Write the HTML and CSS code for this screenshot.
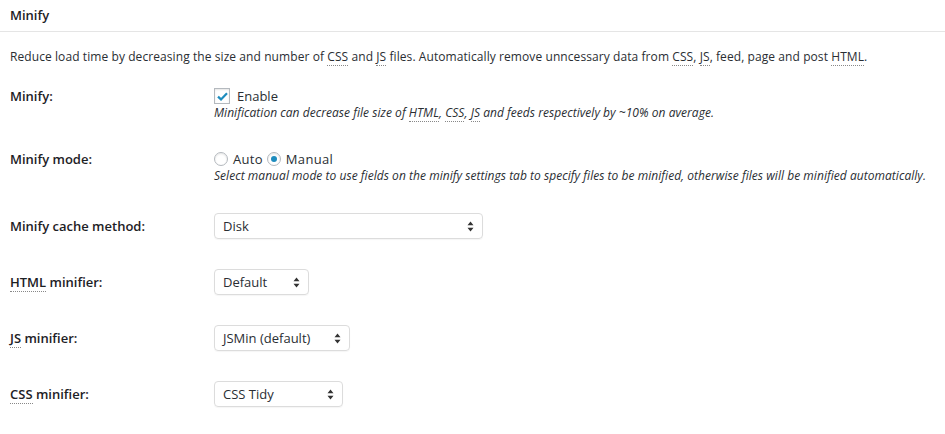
FILE: index.html
```html
<!DOCTYPE html>
<html>
<head>
<meta charset="utf-8">
<link rel="stylesheet" href="styles.css">
</head>
<body>
<div class="hd"><h3 class="hd-title">Minify</h3></div>
<div class="panel">
  <p class="intro">Reduce load time by decreasing the size and number of <abbr>CSS</abbr> and <abbr>JS</abbr> files. Automatically remove unncessary data from <abbr>CSS</abbr>, <abbr>JS</abbr>, feed, page and post <abbr>HTML</abbr>.</p>
  <div class="settings">
    <div class="row">
      <div class="label lh18">Minify:</div>
      <div class="ctrl">
        <div class="line">
          <span class="checkbox"><svg width="11" height="9" viewBox="0 0 11 9"><path d="M1 4.6 L4 7.4 L10 1.2" fill="none" stroke="#1e8cbe" stroke-width="2.2"/></svg></span>
          <span class="opt">Enable</span>
        </div>
        <div class="desc">Minification can decrease file size of <abbr>HTML</abbr>, <abbr>CSS</abbr>, <abbr>JS</abbr> and feeds respectively by ~10% on average.</div>
      </div>
    </div>
    <div class="row">
      <div class="label lh18">Minify mode:</div>
      <div class="ctrl">
        <div class="line">
          <span class="radio"></span><span class="opt r-opt">Auto</span>
          <span class="radio on"><span class="dot"></span></span><span class="opt r-opt">Manual</span>
        </div>
        <div class="desc">Select manual mode to use fields on the minify settings tab to specify files to be minified, otherwise files will be minified automatically.</div>
      </div>
    </div>
    <div class="row">
      <div class="label lh26">Minify cache method:</div>
      <div class="ctrl">
        <div class="select w-disk"><span>Disk</span><svg class="arr" width="7" height="11" viewBox="0 0 7 11"><path d="M3.5 0.5 L6.5 4.2 L0.5 4.2 Z M3.5 10.5 L6.5 6.8 L0.5 6.8 Z" fill="#333"/></svg></div>
      </div>
    </div>
    <div class="row">
      <div class="label lh26"><abbr>HTML</abbr> minifier:</div>
      <div class="ctrl">
        <div class="select w-default"><span>Default</span><svg class="arr" width="7" height="11" viewBox="0 0 7 11"><path d="M3.5 0.5 L6.5 4.2 L0.5 4.2 Z M3.5 10.5 L6.5 6.8 L0.5 6.8 Z" fill="#333"/></svg></div>
      </div>
    </div>
    <div class="row">
      <div class="label lh26"><abbr>JS</abbr> minifier:</div>
      <div class="ctrl">
        <div class="select w-jsmin"><span>JSMin (default)</span><svg class="arr" width="7" height="11" viewBox="0 0 7 11"><path d="M3.5 0.5 L6.5 4.2 L0.5 4.2 Z M3.5 10.5 L6.5 6.8 L0.5 6.8 Z" fill="#333"/></svg></div>
      </div>
    </div>
    <div class="row">
      <div class="label lh26"><abbr>CSS</abbr> minifier:</div>
      <div class="ctrl">
        <div class="select w-tidy"><span>CSS Tidy</span><svg class="arr" width="7" height="11" viewBox="0 0 7 11"><path d="M3.5 0.5 L6.5 4.2 L0.5 4.2 Z M3.5 10.5 L6.5 6.8 L0.5 6.8 Z" fill="#333"/></svg></div>
      </div>
    </div>
  </div>
</div>
</body>
</html>
```
FILE: styles.css
```css
html, body {
  margin: 0;
  padding: 0;
  background: #fff;
}
body {
  font-family: "Open Sans", "Liberation Sans", sans-serif;
  color: #1d2125;
  font-size: 13px;
}
.hd {
  height: 31px;
  border-bottom: 1px solid #e5e5e5;
  box-sizing: content-box;
}
.hd-title {
  margin: 0;
  padding: 6px 10px 0;
  font-size: 13px;
  font-weight: 600;
  line-height: 18px;
}
.panel {
  padding: 0 10px;
}
.intro {
  margin: 16px 0 0;
  font-size: 12px;
  line-height: 18px;
  letter-spacing: 0.08px;
  color: #2a2e33;
}
abbr {
  text-decoration: none;
  border-bottom: 1px dotted #888;
}
.settings {
  margin-top: 6px;
  display: flex;
  flex-direction: column;
}
.row {
  display: flex;
  align-items: flex-start;
  padding: 15px 0;
}
.label {
  width: 204px;
  flex: none;
  font-weight: 600;
  font-size: 13px;
}
.lh18 { line-height: 18px; }
.lh26 { line-height: 26px; }
.ctrl {
  display: flex;
  flex-direction: column;
}
.line {
  display: flex;
  align-items: center;
  height: 18px;
}
.checkbox {
  width: 14px;
  height: 14px;
  border: 1px solid #b4b9be;
  box-shadow: inset 0 1px 2px rgba(0,0,0,.1);
  background: #fff;
  display: flex;
  align-items: center;
  justify-content: center;
  margin-right: 7px;
}
.opt {
  font-size: 13px;
  line-height: 18px;
  color: #2a2e33;
}
.radio {
  width: 12px;
  height: 12px;
  border: 1px solid #b4b9be;
  border-radius: 50%;
  box-shadow: inset 0 1px 2px rgba(0,0,0,.1);
  background: #fff;
  display: flex;
  align-items: center;
  justify-content: center;
  margin-right: 5px;
}
.r-opt {
  margin-right: 4px;
  letter-spacing: 0.3px;
}
.dot {
  width: 6px;
  height: 6px;
  border-radius: 50%;
  background: #1e8cbe;
}
.desc {
  font-size: 12px;
  font-style: italic;
  line-height: 15px;
  letter-spacing: 0.04px;
  color: #2a2e33;
}
.select {
  height: 24px;
  border: 1px solid #dcdcdc;
  border-radius: 4px;
  box-shadow: 0 1px 1px rgba(0,0,0,.04);
  display: flex;
  align-items: center;
  justify-content: space-between;
  padding: 0 8px 0 8px;
  font-size: 13px;
  color: #2a2e33;
}
.arr { flex: none; }
.w-disk { width: 251px; }
.w-default { width: 77px; }
.w-jsmin { width: 118px; }
.w-tidy { width: 111px; }
```
